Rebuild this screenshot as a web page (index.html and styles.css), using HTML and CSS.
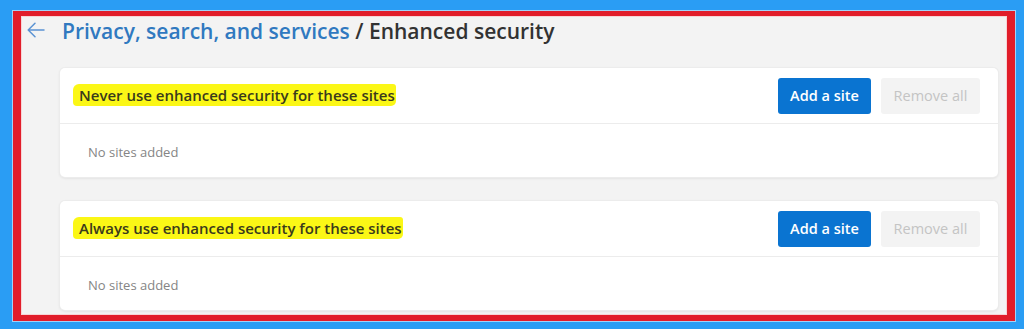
FILE: index.html
```html
<!DOCTYPE html>
<html lang="en">
<head>
<meta charset="utf-8">
<title>Enhanced security</title>
<link rel="stylesheet" href="styles.css">
</head>
<body>
<div class="frame">
  <div class="page">
    <div class="heading">
      <svg class="back" width="18" height="16" viewBox="0 0 18 16" aria-hidden="true">
        <path d="M17 8H1.5M8 1.2L1.2 8L8 14.8" fill="none" stroke="#5b93d3" stroke-width="1.5" stroke-linecap="round" stroke-linejoin="round"/>
      </svg>
      <h1 class="title"><span class="crumb">Privacy, search, and services</span> / Enhanced security</h1>
    </div>

    <section class="card">
      <div class="card-head">
        <h2 class="card-title"><span class="mark">Never use enhanced security for these sites</span></h2>
        <div class="actions">
          <button class="btn btn-primary">Add a site</button>
          <button class="btn btn-disabled">Remove all</button>
        </div>
      </div>
      <div class="card-body">No sites added</div>
    </section>

    <section class="card">
      <div class="card-head">
        <h2 class="card-title"><span class="mark">Always use enhanced security for these sites</span></h2>
        <div class="actions">
          <button class="btn btn-primary">Add a site</button>
          <button class="btn btn-disabled">Remove all</button>
        </div>
      </div>
      <div class="card-body">No sites added</div>
    </section>
  </div>
</div>
</body>
</html>
```

FILE: styles.css
```css
html, body {
  margin: 0;
  padding: 0;
}

body {
  background: #2a9df4;
  width: 1024px;
  height: 329px;
  overflow: hidden;
  font-family: "Open Sans", "Noto Sans", "Liberation Sans", sans-serif;
}

.frame {
  box-sizing: border-box;
  margin: 11px 9px 0 13px;
  height: 310px;
  border-style: solid;
  border-color: #e11d2a;
  border-width: 5px 8px 6px 8px;
  outline: 1px solid rgba(255, 255, 255, 0.55);
  overflow: hidden;
}

.page {
  box-sizing: border-box;
  height: 100%;
  background: #f3f3f3;
  padding: 0 9px 0 39px;
  box-shadow: inset 0 0 0 1px #f7d4d6;
}

.heading {
  display: flex;
  align-items: center;
  height: 30px;
  margin-left: -33px;
  margin-bottom: 22px;
}

.back {
  flex: none;
  margin-right: 17px;
  margin-top: -3px;
}

.title {
  margin: 0;
  font-size: 21px;
  font-weight: 600;
  line-height: 30px;
  color: #323232;
  white-space: nowrap;
}

.crumb {
  color: #3079c0;
}

.card {
  background: #ffffff;
  border-radius: 5px;
  box-shadow: 0 0 0 1px #ececec, 0 1px 3px rgba(0, 0, 0, 0.12);
  margin-bottom: 24px;
}

.card-head {
  display: flex;
  align-items: center;
  justify-content: space-between;
  height: 55px;
  padding: 0 18px 0 13px;
  border-bottom: 1px solid #ececec;
}

.card-title {
  margin: 0;
  font-size: 15px;
  font-weight: 600;
  color: #3a3a1c;
  line-height: 19px;
}

.mark {
  background: #fbf716;
  padding: 1px 1px 1px 6px;
  border-radius: 6px 3px 5px 4px;
}

.actions {
  display: flex;
  gap: 10px;
}

.btn {
  font-family: inherit;
  font-size: 14.5px;
  height: 36px;
  border-radius: 3px;
  border: none;
  padding: 0;
  cursor: default;
}

.btn-primary {
  width: 93px;
  background: #0a74d1;
  color: #ffffff;
  font-weight: 600;
}

.btn-disabled {
  width: 99px;
  background: #f3f3f3;
  color: #c4c4c4;
  font-weight: 400;
}

.card-body {
  height: 53px;
  display: flex;
  align-items: center;
  padding: 2px 0 0 28px;
  box-sizing: border-box;
  font-size: 13px;
  color: #858585;
}
```
